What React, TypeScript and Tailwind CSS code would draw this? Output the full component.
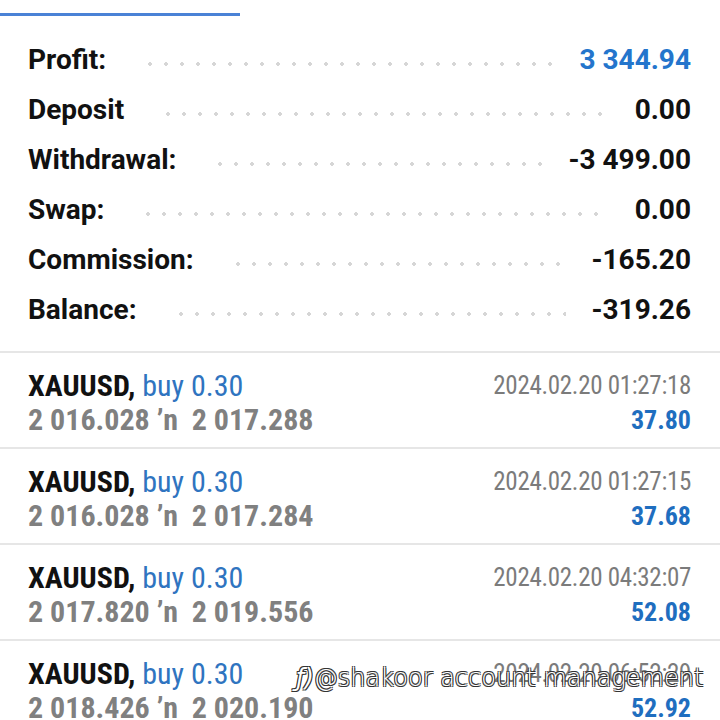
const summary = [
  { label: "Profit:", value: "3 344.94", blue: true },
  { label: "Deposit", value: "0.00" },
  { label: "Withdrawal:", value: "-3 499.00" },
  { label: "Swap:", value: "0.00" },
  { label: "Commission:", value: "-165.20" },
  { label: "Balance:", value: "-319.26" },
];

const trades = [
  { open: "2 016.028", close: "2 017.288", time: "2024.02.20 01:27:18", profit: "37.80" },
  { open: "2 016.028", close: "2 017.284", time: "2024.02.20 01:27:15", profit: "37.68" },
  { open: "2 017.820", close: "2 019.556", time: "2024.02.20 04:32:07", profit: "52.08" },
  { open: "2 018.426", close: "2 020.190", time: "2024.02.20 06:52:29", profit: "52.92" },
];

const cond = "font-['Roboto_Condensed','Liberation_Sans_Narrow',Roboto,sans-serif]";

function TradeRow({ t }: { t: (typeof trades)[number] }) {
  return (
    <div className={`flex justify-between border-t-2 border-[#e6e6e6] pl-[28px] pr-[29px] pt-[16px] pb-[10px] ${cond}`}>
      <div>
        <div className="h-[34px] text-[30px] leading-[34px]">
          <span className="font-bold text-[#111]">XAUUSD,</span>{" "}
          <span className="text-[#2f74c0]">buy 0.30</span>
        </div>
        <div className="h-[34px] text-[30px] leading-[34px] font-bold text-[#808080] whitespace-pre">
          {t.open} ’n  {t.close}
        </div>
      </div>
      <div className="flex flex-col items-end">
        <div className="h-[34px] text-[25px] leading-[34px] text-[#7b7b7b] tracking-[-0.3px]">{t.time}</div>
        <div className="h-[34px] text-[26px] leading-[34px] font-bold text-[#1f6ebf]">{t.profit}</div>
      </div>
    </div>
  );
}

export default function App() {
  return (
    <div className="relative h-[720px] w-[720px] overflow-hidden bg-white font-['Roboto',sans-serif]">
      <div className="h-[16px] flex items-end">
        <div className="h-[3px] w-[240px] bg-[#4a82d6]" />
      </div>

      <div className="pt-[19px] pb-[16px] pl-[28px] pr-[29px]">
        {summary.map((s) => (
          <div key={s.label} className="flex h-[50px] items-center">
            <span className="text-[28px] font-bold text-[#111]">{s.label}</span>
            <div className="ml-[36px] mr-[26px] h-[6px] flex-1 translate-y-[4px] bg-[radial-gradient(circle,#d6d6d6_1.6px,transparent_1.8px)] bg-[length:16px_6px]" />
            <span className={`text-[28px] font-bold ${s.blue ? "text-[#2475cc]" : "text-[#111]"}`}>
              {s.value}
            </span>
          </div>
        ))}
      </div>

      {trades.map((t, i) => (
        <TradeRow key={i} t={t} />
      ))}

      <div className="absolute left-[296px] top-[660px] flex items-center whitespace-nowrap text-[24px] font-['DejaVu_Sans',sans-serif] font-extralight text-white [text-shadow:-1px_-1px_0_#333,1px_-1px_0_#333,-1px_1px_0_#333,1px_1px_0_#333]">
        <span className="italic">ƒ)</span>
        <span>@shakoor account management</span>
      </div>
    </div>
  );
}
